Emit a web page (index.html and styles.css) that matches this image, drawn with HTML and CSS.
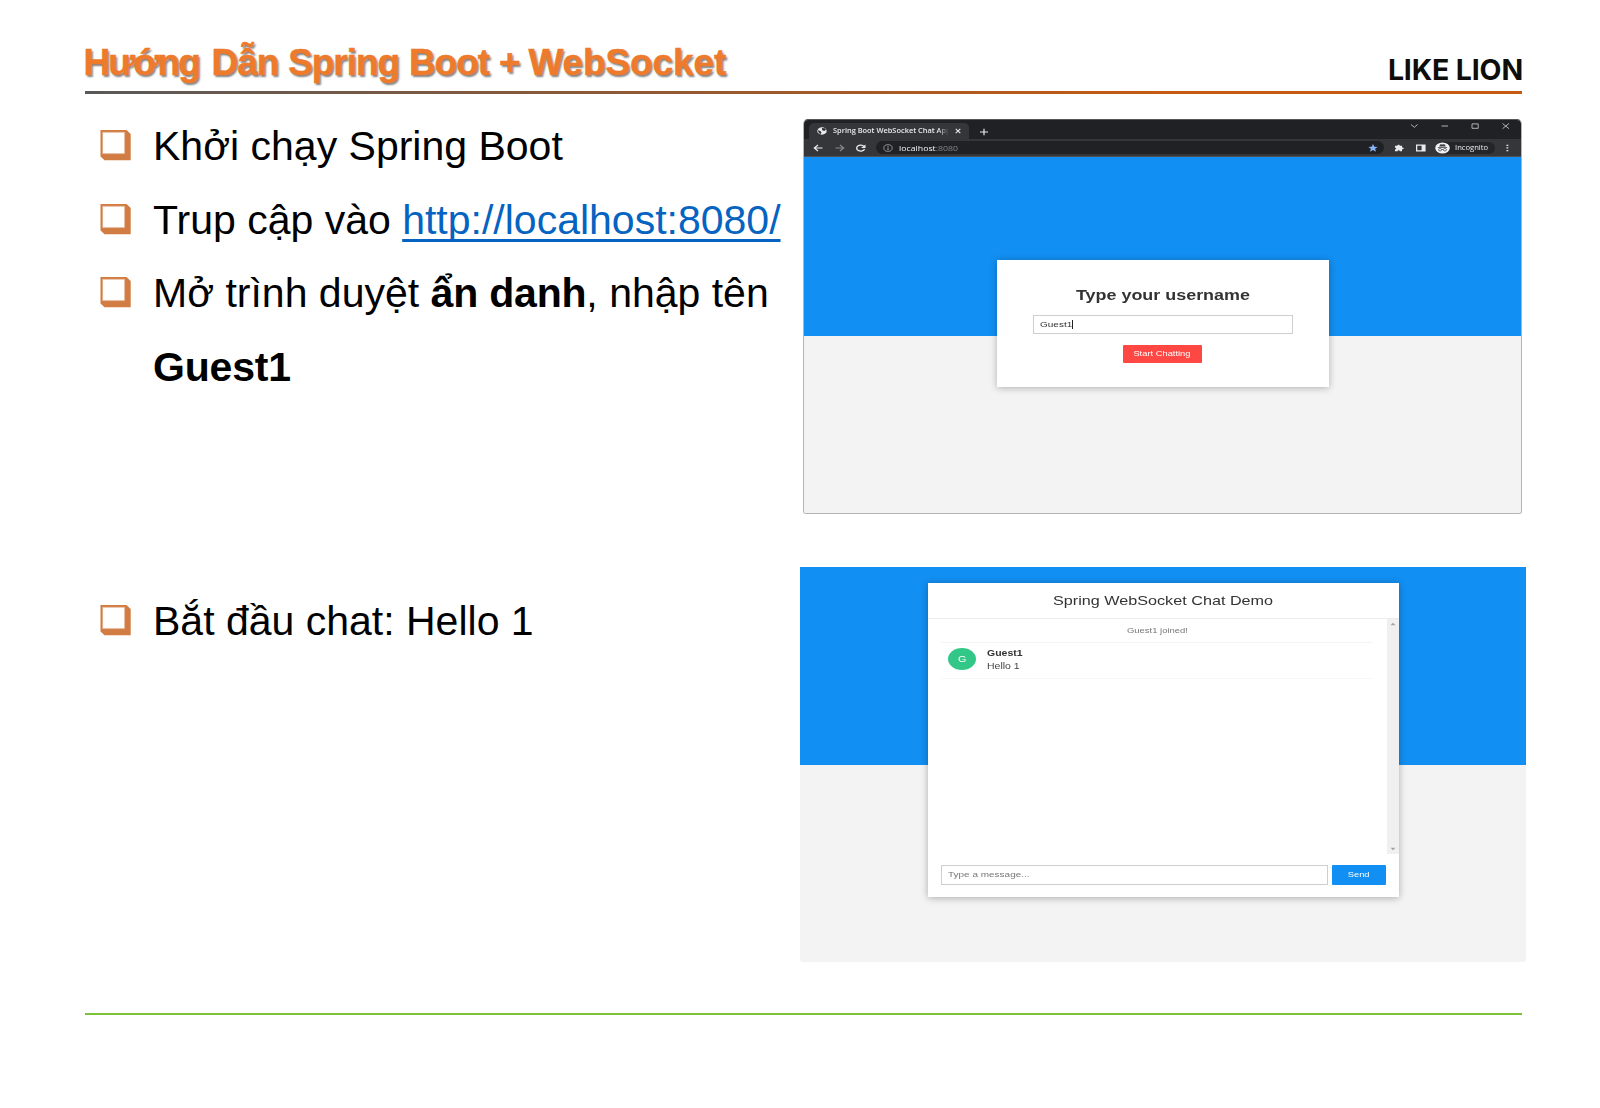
FILE: index.html
```html
<!DOCTYPE html>
<html lang="vi">
<head>
<meta charset="utf-8">
<title>Hướng Dẫn Spring Boot + WebSocket</title>
<link rel="stylesheet" href="styles.css">
</head>
<body>
<svg width="0" height="0" class="defs">
  <symbol id="bullet" viewBox="0 0 31 31">
    <path fill="#d07c42" d="M.5 0H26.500L30.700 4V30.300H4.500L.5 26.500Z"/>
    <path fill="#fff" stroke="#e3a880" stroke-width=".7" d="M2.600 2.200H24.700V23.700H2.600Z"/>
  </symbol>
</svg>
<header class="header">
  <h1 class="title"><span class="tight">Hướng</span> Dẫn Spring Boot + <span class="loose">WebSocket</span></h1>
  <div class="logo">LIKE LION</div>
</header>
<div class="rule"></div>
<main class="main">
  <ul class="steps">
    <li><svg class="bullet"><use href="#bullet"/></svg><span>Khởi chạy Spring Boot</span></li>
    <li><svg class="bullet"><use href="#bullet"/></svg><span>Trup cập vào <a class="link">http://localhost:8080/</a></span></li>
    <li><svg class="bullet"><use href="#bullet"/></svg><span>Mở trình duyệt <b>ẩn danh</b>, nhập tên<br><b>Guest1</b></span></li>
    <li class="last"><svg class="bullet"><use href="#bullet"/></svg><span>Bắt đầu chat: Hello 1</span></li>
  </ul>
  <div class="shots">
    <section class="browser">
      <div class="tabbar">
        <div class="tab">
          <svg class="globe" viewBox="0 0 10 8"><ellipse cx="5" cy="4" rx="4.700" ry="3.700" fill="#e8eaed"/><path fill="#35363a" d="M1 3.300 3.500 4l1 1.500-.7 1.500C2 6.500 1 5 1 3.300ZM5 1l3 .3 1 1.700-2 1-2-1Z"/></svg>
          <span class="tab-name"><span class="wide">Spring Boot WebSocket Chat App</span></span>
          <svg class="tab-x" viewBox="0 0 6 6"><path d="M.7.9 5.300 5.100M5.300.9.7 5.100" stroke="#e8eaed" stroke-width="1.100"/></svg>
        </div>
        <svg class="plus" viewBox="0 0 8 8"><path d="M4 .8v6.400M0 4h8" stroke="#e8eaed" stroke-width="1.200"/></svg>
        <svg class="controls" viewBox="0 0 100 10"><g fill="none" stroke="#bfc1c4" stroke-width=".9"><path d="M1 3.500 4.300 6.300 7.600 3.500M31.500 5h6.500M62 2.900h6.200v4.400H62ZM92.500 2.500l6.500 5.200M99 2.500l-6.500 5.200"/></g></svg>
      </div>
      <div class="toolbar">
        <svg class="nav" viewBox="0 0 60 12"><g fill="none" stroke-width="1.200"><path stroke="#e8eaed" d="M9.500 6H1.500M5 3 1.300 6 5 9"/><path stroke="#85878a" d="M22.500 6h8M27 3l3.700 3L27 9"/><path stroke="#e8eaed" stroke-width="1.400" d="M51 4.400A4 3 0 1 0 51.500 7"/></g><path fill="#e8eaed" d="M52.500 2.500V6H48Z"/></svg>
        <div class="omnibox">
          <svg class="info" viewBox="0 0 10 8"><ellipse cx="5" cy="4" rx="4.200" ry="3.300" fill="none" stroke="#a9abae" stroke-width=".8"/><path d="M5 3.500V6M5 2v.8" stroke="#a9abae"/></svg>
          <span class="url">localhost<i>:8080</i></span>
          <svg class="star" viewBox="0 0 10 8"><path fill="#8ab4f8" d="m5 0 1.300 2.700 3.400.2L7.100 4.800 8 7.700 5 6.100 2 7.700l.9-2.900L.3 2.900l3.400-.2Z"/></svg>
        </div>
        <svg class="puzzle" viewBox="0 0 10 8"><path fill="#e8eaed" d="M1 1.700h2.300C3.200.5 5.900.5 5.800 1.700H8v1.700c2.300-.2 2.300 2 0 1.900v2H5.800C5.900 6 3.500 6 3.600 7.300H1V5.500c1.500.1 1.500-1.900 0-1.800Z"/></svg>
        <svg class="panel" viewBox="0 0 10 8"><path fill="#e8eaed" d="M0 .5h9.600v7H0Z"/><path fill="#35363a" d="M1.300 1.700h4.300v4.600H1.300Z"/></svg>
        <div class="incognito">
          <svg viewBox="0 0 15 12"><ellipse cx="7.500" cy="6" rx="7.300" ry="5.500" fill="#f1f3f4"/><path fill="#3c4043" d="m5 2.500 1.300-.3 1.200.3 1.200-.3 1.300.3.7 2H4.300ZM2.800 5h9.400v.7H2.800Z"/><g fill="none" stroke="#3c4043" stroke-width=".7"><ellipse cx="5.100" cy="7.700" rx="1.600" ry="1.200"/><ellipse cx="9.900" cy="7.700" rx="1.600" ry="1.200"/><path d="M6.700 7.500h1.600"/></g></svg>
          <span>Incognito</span>
        </div>
        <svg class="dots" viewBox="0 0 3 8"><path fill="#e8eaed" d="M.5.7h1.800v1.300H.5ZM.5 3.300h1.800v1.300H.5ZM.5 5.900h1.800v1.300H.5Z"/></svg>
      </div>
      <div class="page login-page">
        <div class="login">
          <h2><span class="wide">Type your username</span></h2>
          <div class="name-field"><span class="wide">Guest1</span><i class="caret"></i></div>
          <div class="start"><span class="wide">Start Chatting</span></div>
        </div>
      </div>
    </section>
    <section class="page chat-page">
      <div class="chat">
        <div class="chat-title"><span class="wide">Spring WebSocket Chat Demo</span></div>
        <div class="chat-body">
          <div class="messages">
            <div class="joined"><span class="wide">Guest1 joined!</span></div>
            <div class="message">
              <div class="avatar"><span class="wide">G</span></div>
              <div class="text"><b class="wide">Guest1</b><span class="wide">Hello 1</span></div>
            </div>
          </div>
          <div class="scrollbar">
            <svg viewBox="0 0 6 4"><path fill="#a3a3a3" d="M.5 3.300 3 .7l2.500 2.600Z"/></svg>
            <svg viewBox="0 0 6 4"><path fill="#a3a3a3" d="M.5.7h5L3 3.300Z"/></svg>
          </div>
        </div>
        <div class="composer">
          <div class="message-field"><span class="wide">Type a message...</span></div>
          <div class="send"><span class="wide">Send</span></div>
        </div>
      </div>
    </section>
  </div>
</main>
<footer class="footer"></footer>
</body>
</html>
```
FILE: styles.css
```css
* { box-sizing: border-box; }
body {
  margin: 0;
  width: 1600px;
  height: 1108px;
  overflow: hidden;
  background: #fff;
  color: #000;
  font-family: "Liberation Sans", Arial, sans-serif;
}
svg { display: block; flex: none; }
.defs { position: absolute; }
.wide { display: inline-block; transform: scaleX(1.265); white-space: nowrap; }

.header {
  display: flex;
  justify-content: space-between;
  height: 91px;
  padding: 0 78px 0 83.500px;
}
.title {
  margin: 0;
  padding-top: 42px;
  font-size: 37px;
  line-height: 42px;
  letter-spacing: -1.050px;
  word-spacing: .7px;
  color: #ee7a2c;
  white-space: nowrap;
  -webkit-text-stroke: .5px #ee7a2c;
  text-shadow: 1.500px 1.500px 2px rgba(0, 0, 0, .5);
}
.tight { letter-spacing: -1.900px; margin-right: 2.500px; }
.loose { letter-spacing: -.100px; margin-left: -1px; }
.logo {
  padding-top: 52px;
  font: 700 28.500px/36px Inter, sans-serif;
  letter-spacing: -.150px;
  word-spacing: 0;
  margin-right: -1px;
  color: #0d0d0b;
  white-space: nowrap;
}
.rule {
  width: 1437px;
  height: 3px;
  margin-left: 85px;
  background: linear-gradient(90deg, #595959, #c55a11 75%);
}
.main {
  display: grid;
  grid-template-columns: 700px 726px;
  height: 919px;
  margin-left: 100px;
}

.steps {
  margin: 0;
  padding: 16px 0 0;
  list-style: none;
  font-size: 41px;
  line-height: 73.500px;
  white-space: nowrap;
}
.steps li { display: flex; gap: 22px; }
.steps .last { margin-top: 181px; }
.steps b { letter-spacing: -.200px; }
.bullet { width: 31px; height: 31px; margin-top: 20px; }
.link {
  color: #0563c1;
  text-decoration: underline;
  text-decoration-thickness: 3px;
  text-underline-offset: 4.500px;
  text-decoration-skip-ink: none;
}

.shots { display: flex; flex-direction: column; gap: 53px; padding-top: 25px; }
.browser {
  width: 719px;
  height: 395px;
  margin-left: 3px;
  border: 1px solid #b4b4b4;
  border-top-color: #55565a;
  border-radius: 5px 5px 3px 3px;
  overflow: hidden;
  display: flex;
  flex-direction: column;
}
.tabbar {
  display: flex;
  flex: none;
  height: 19px;
  padding: 3px 11px 0 5px;
  background: #202124;
}
.tab {
  display: flex;
  align-items: center;
  width: 160px;
  padding-left: 8px;
  background: #35363a;
  border-radius: 5px 5px 0 0;
}
.globe { width: 10px; height: 8px; }
.tab-name {
  width: 117px;
  margin-left: 6px;
  overflow: hidden;
  font: 600 6.500px/12px "Open Sans", sans-serif;
  color: #e8eaed;
  -webkit-mask-image: linear-gradient(90deg, #000 90%, transparent 99%);
}
.tab-name .wide { transform: scaleX(1.140); transform-origin: left; }
.tab-x { width: 6px; height: 6px; margin-left: 5px; }
.plus { width: 8px; height: 8px; margin: 4.500px 0 0 10.500px; }
.controls { width: 100px; height: 10px; margin: -2px 0 0 auto; }
.toolbar {
  display: flex;
  align-items: center;
  flex: none;
  height: 17.500px;
  padding: 1px 0 0 9px;
  background: #35363a;
  border-bottom: 1px solid #505155;
}
.nav { width: 60px; height: 12px; }
.omnibox {
  display: flex;
  align-items: center;
  width: 508px;
  height: 13px;
  margin-left: 2.500px;
  padding: 0 6px 0 7px;
  border-radius: 7px;
  background: #202124;
}
.info { width: 10px; height: 8px; }
.url {
  margin-left: 6px;
  font: 500 7.200px/12px "Open Sans", sans-serif;
  color: #f1f3f4;
  transform: scaleX(1.220);
  transform-origin: left;
}
.url i { font-style: normal; font-weight: 400; color: #85878a; }
.star { width: 10px; height: 8px; margin-left: auto; }
.puzzle { width: 10px; height: 8px; margin-left: 10px; }
.panel { width: 10px; height: 8px; margin-left: 12px; }
.incognito {
  display: flex;
  align-items: center;
  gap: 5px;
  width: 60px;
  height: 12px;
  margin-left: 9px;
  border-radius: 6px;
  background: #242529;
  font: 500 6.300px/12px "Open Sans", sans-serif;
  color: #e8eaed;
}
.incognito svg { width: 15px; height: 12px; }
.incognito span { transform: scaleX(1.210); transform-origin: left; }
.dots { width: 3px; height: 8px; margin-left: 11.500px; }

.page { display: flex; justify-content: center; }
.login-page {
  flex: 1;
  padding: 103.500px 0 0 .5px;
  background: linear-gradient(#128ff2 178.500px, #f3f3f3 178.500px);
}
.login {
  display: flex;
  flex-direction: column;
  align-items: center;
  width: 332.500px;
  height: 126.500px;
  padding-top: 25px;
  background: #fff;
  box-shadow: 0 1px 7px rgba(0, 0, 0, .28);
}
.login h2 { margin: 0; font-size: 14px; line-height: 20px; color: #333; }
.login h2 .wide { transform: scaleX(1.280); }
.name-field {
  display: flex;
  align-items: center;
  width: 260px;
  height: 18.500px;
  margin-top: 10px;
  padding-left: 6.500px;
  border: 1px solid #cfcfcf;
  font-size: 8px;
  color: #333;
}
.name-field .wide { transform: scaleX(1.250); transform-origin: left; }
.caret { width: 1px; height: 9px; margin-left: 6px; background: #222; }
.start {
  width: 79px;
  height: 18px;
  margin: 11.500px 1px 0 0;
  border-radius: 1px;
  background: #ff4743;
  color: #fff;
  font-size: 7.500px;
  line-height: 18px;
  text-align: center;
}
.start .wide { transform: scaleX(1.245); }

.chat-page {
  width: 726px;
  height: 395px;
  padding: 16px 0 0 1px;
  border-radius: 0 0 3px 3px;
  background: linear-gradient(#128ff2 198px, #f3f3f3 198px);
}
.chat {
  width: 471px;
  height: 314px;
  background: #fff;
  box-shadow: 0 1px 7px rgba(0, 0, 0, .3);
}
.chat-title {
  height: 36px;
  border-bottom: 1px solid #ececec;
  font-size: 12.800px;
  line-height: 36px;
  text-align: center;
  color: #333;
}
.chat-body { display: flex; height: 235px; }
.messages { flex: 1; padding: 0 14px 0 13px; }
.joined {
  height: 24px;
  border-bottom: 1px solid #f4f4f4;
  font-size: 7.600px;
  line-height: 24px;
  text-align: center;
  color: #777;
}
.joined .wide { transform: scaleX(1.245); }
.message {
  display: flex;
  align-items: center;
  gap: 11px;
  height: 36px;
  padding: 0 0 3px 7px;
  border-bottom: 1px solid #f7f7f7;
}
.avatar {
  width: 28px;
  height: 22px;
  border-radius: 50%;
  background: #32c787;
  color: #fff;
  font-size: 8.500px;
  line-height: 22px;
  text-align: center;
}
.text {
  display: flex;
  flex-direction: column;
  align-items: flex-start;
  padding-top: 1px;
  font-size: 8.300px;
  line-height: 12.500px;
  color: #444;
}
.text .wide { transform-origin: left; }
.text b { color: #333; }
.scrollbar {
  display: flex;
  flex-direction: column;
  justify-content: space-between;
  align-items: center;
  width: 12px;
  padding: 3px 0;
  background: #f0f0f0;
}
.scrollbar svg { width: 6px; height: 4px; }
.composer { display: flex; gap: 3.500px; padding: 10.500px 13px 0; }
.message-field {
  width: 387px;
  height: 20.500px;
  padding-left: 6px;
  border: 1px solid #cfcfcf;
  font-size: 7.900px;
  line-height: 18px;
  color: #777;
}
.message-field .wide { transform-origin: left; }
.send {
  width: 54px;
  height: 20px;
  border-radius: 1px;
  background: #128ff2;
  color: #fff;
  font-size: 7.400px;
  line-height: 19px;
  text-align: center;
}
.footer { width: 1437px; height: 2px; margin-left: 85px; background: #7ac239; }
```
